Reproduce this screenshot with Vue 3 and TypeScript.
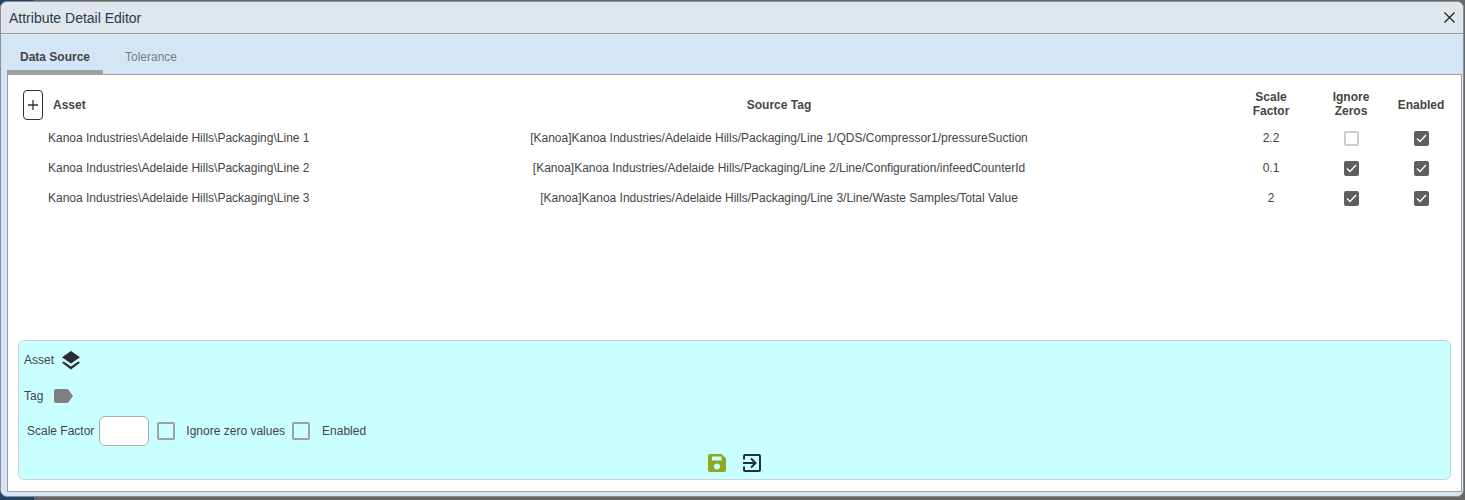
<script setup lang="ts">
interface SourceRow {
  asset: string;
  tag: string;
  scale: string;
  ignoreZeros: boolean;
  enabled: boolean;
}

const base = 'Kanoa Industries\\Adelaide Hills\\Packaging\\';
const tagBase = '[Kanoa]Kanoa Industries/Adelaide Hills/Packaging/';

const rows: SourceRow[] = [
  { asset: base + 'Line 1', tag: tagBase + 'Line 1/QDS/Compressor1/pressureSuction', scale: '2.2', ignoreZeros: false, enabled: true },
  { asset: base + 'Line 2', tag: tagBase + 'Line 2/Line/Configuration/infeedCounterId', scale: '0.1', ignoreZeros: true, enabled: true },
  { asset: base + 'Line 3', tag: tagBase + 'Line 3/Line/Waste Samples/Total Value', scale: '2', ignoreZeros: true, enabled: true },
];
</script>

<template>
  <div class="page">
    <div class="dialog">
      <header class="title-bar">
        <span class="title">Attribute Detail Editor</span>
        <svg class="close" width="11" height="11" viewBox="0 0 11 11">
          <path d="M.5.5l10 10M10.500.5l-10 10" stroke="#222" stroke-width="1.3" fill="none" />
        </svg>
      </header>
      <div class="body">
        <nav class="tabs">
          <div class="tab active">Data Source</div>
          <div class="tab">Tolerance</div>
        </nav>
        <section class="panel">
          <div class="table">
            <div class="row head">
              <div class="asset-head">
                <button class="add" type="button">
                  <svg width="10" height="10" viewBox="0 0 10 10">
                    <path d="M5 0v10M0 5h10" stroke="#333" stroke-width="1.3" fill="none" />
                  </svg>
                </button>
                <span>Asset</span>
              </div>
              <div class="center">Source Tag</div>
              <div class="center two-line">Scale<br />Factor</div>
              <div class="center two-line">Ignore<br />Zeros</div>
              <div class="center">Enabled</div>
            </div>
            <div v-for="row in rows" :key="row.tag" class="row item">
              <div class="asset">{{ row.asset }}</div>
              <div class="center">{{ row.tag }}</div>
              <div class="center">{{ row.scale }}</div>
              <div class="center cell-check">
                <span class="check" :class="{ on: row.ignoreZeros }">
                  <svg v-if="row.ignoreZeros" width="11" height="9" viewBox="0 0 11 9">
                    <path d="M1 4.500l3 3 6-6.500" stroke="#fff" stroke-width="1.4" fill="none" />
                  </svg>
                </span>
              </div>
              <div class="center cell-check">
                <span class="check" :class="{ on: row.enabled }">
                  <svg v-if="row.enabled" width="11" height="9" viewBox="0 0 11 9">
                    <path d="M1 4.500l3 3 6-6.500" stroke="#fff" stroke-width="1.4" fill="none" />
                  </svg>
                </span>
              </div>
            </div>
          </div>

          <div class="editor">
            <div class="field asset-field">
              <span>Asset</span>
              <svg width="18" height="20" viewBox="0 0 18 20">
                <path d="M9 1l9 6.300L9 13.500 0 7.300z" fill="#2b2b2b" />
                <path d="M1.600 11.500L9 16.500l7.400-5 1.600 1.200-9 6.800-9-6.800z" fill="#2b2b2b" />
              </svg>
            </div>
            <div class="field tag-field">
              <span>Tag</span>
              <svg width="19" height="14" viewBox="0 0 19 14">
                <path d="M2 0h11l1.500.7L19 7l-4.500 6.300-1.500.7H2a2 2 0 0 1-2-2V2a2 2 0 0 1 2-2z" fill="#808080" />
              </svg>
            </div>
            <div class="field scale-field">
              <span>Scale Factor</span>
              <div class="input"></div>
              <span class="box"></span>
              <span class="box-label">Ignore zero values</span>
              <span class="box second"></span>
              <span class="box-label last">Enabled</span>
            </div>
            <div class="actions">
              <svg width="18" height="18" viewBox="0 0 18 18">
                <path fill-rule="evenodd" d="M2 0h11.500L18 4.500V16a2 2 0 0 1-2 2H2a2 2 0 0 1-2-2V2a2 2 0 0 1 2-2zm2 2.500v4h9.500v-4zM9 9.500a3 3 0 1 0 0 6 3 3 0 0 0 0-6z" fill="#8fa821" />
              </svg>
              <svg width="18" height="18" viewBox="0 0 18 18">
                <path d="M1 5.500V2a1 1 0 0 1 1-1h14a1 1 0 0 1 1 1v14a1 1 0 0 1-1 1H2a1 1 0 0 1-1-1v-3.500M0 9h12M8 4.500L12.500 9 8 13.500" stroke="#22303a" stroke-width="2" fill="none" />
              </svg>
            </div>
          </div>
        </section>
      </div>
    </div>
  </div>
</template>

<style>
html,
body {
  margin: 0;
  background: #66686a;
}
</style>

<style scoped>
.page {
  width: 1465px;
  height: 500px;
  box-sizing: border-box;
  padding-top: 1px;
  background: linear-gradient(90deg, #1e4468 0, #1e4468 34px, #66686a 34px);
  font-family: "Liberation Sans", Arial, sans-serif;
  font-size: 12px;
  color: #444;
  overflow: hidden;
}
.dialog {
  width: 1464px;
  height: 496px;
  box-sizing: border-box;
  border-radius: 7px;
  border: 1px solid #8f8f8f;
  background: #d4e5f6;
  display: flex;
  flex-direction: column;
  overflow: hidden;
}
.title-bar {
  height: 32px;
  flex: none;
  box-sizing: border-box;
  display: flex;
  align-items: center;
  justify-content: space-between;
  padding: 0 8px;
  background: #dfe6ec;
  border-bottom: 1px solid #9b9b9b;
}
.title {
  font-size: 14px;
  color: #2d3a4a;
}
.body {
  flex: 1;
  display: flex;
  flex-direction: column;
  padding: 6px 1px 4px 6px;
  min-height: 0;
}
.tabs {
  display: flex;
  height: 34px;
  flex: none;
}
.tab {
  margin-left: 22px;
  line-height: 34px;
  color: #7b7f84;
}
.tab.active {
  width: 96px;
  height: 34px;
  margin-left: 0;
  box-sizing: border-box;
  padding-left: 13px;
  color: #444;
  font-weight: 700;
  border-bottom: 4px solid #a0a0a0;
}
.panel {
  flex: 1;
  min-height: 0;
  box-sizing: border-box;
  background: #fff;
  border: 1px solid #a0a0a0;
  padding: 15px 10px 11px 10px;
  display: flex;
  flex-direction: column;
  justify-content: space-between;
}
.row {
  display: grid;
  grid-template-columns: 304px 914px 70px 90px 50px;
  align-items: center;
}
.head {
  height: 30px;
  margin-bottom: 3px;
  font-weight: 700;
  line-height: 14px;
}
.two-line {
  padding-bottom: 2px;
}
.item {
  height: 30px;
}
.asset-head {
  display: flex;
  align-items: center;
  gap: 10px;
  padding-left: 5px;
}
.asset {
  padding-left: 30px;
}
.center {
  text-align: center;
}
.cell-check {
  display: flex;
  justify-content: center;
}
.add {
  width: 20px;
  height: 30px;
  padding: 0;
  background: #fff;
  border: 1px solid #333;
  border-radius: 4px;
  display: flex;
  align-items: center;
  justify-content: center;
}
.check {
  display: flex;
  align-items: center;
  justify-content: center;
  width: 15px;
  height: 15px;
  box-sizing: border-box;
  border: 2px solid #ccc;
  border-radius: 2px;
  background: #fff;
}
.check.on {
  background: #5f5f5f;
  border-color: #5f5f5f;
}
.editor {
  height: 140px;
  box-sizing: border-box;
  background: #c9ffff;
  border: 1px solid #ccd0d2;
  border-radius: 6px;
  padding: 0 5px;
  display: flex;
  flex-direction: column;
}
.field {
  display: flex;
  align-items: center;
}
.asset-field {
  height: 38px;
  gap: 8px;
}
.tag-field {
  height: 34px;
  gap: 11px;
}
.scale-field {
  height: 36px;
  padding-left: 3px;
}
.input {
  width: 50px;
  height: 30px;
  box-sizing: border-box;
  margin: 0 8px 0 5px;
  background: #fff;
  border: 1px solid #aaa;
  border-radius: 6px;
}
.box {
  width: 18px;
  height: 18px;
  box-sizing: border-box;
  border: 2px solid #a0a0a0;
  border-radius: 2px;
}
.box.second {
  margin-left: 7px;
}
.box-label {
  margin-left: 11px;
}
.box-label.last {
  margin-left: 12px;
}
.actions {
  display: flex;
  justify-content: center;
  gap: 17px;
  margin-top: 5px;
  padding-right: 1px;
}
</style>
